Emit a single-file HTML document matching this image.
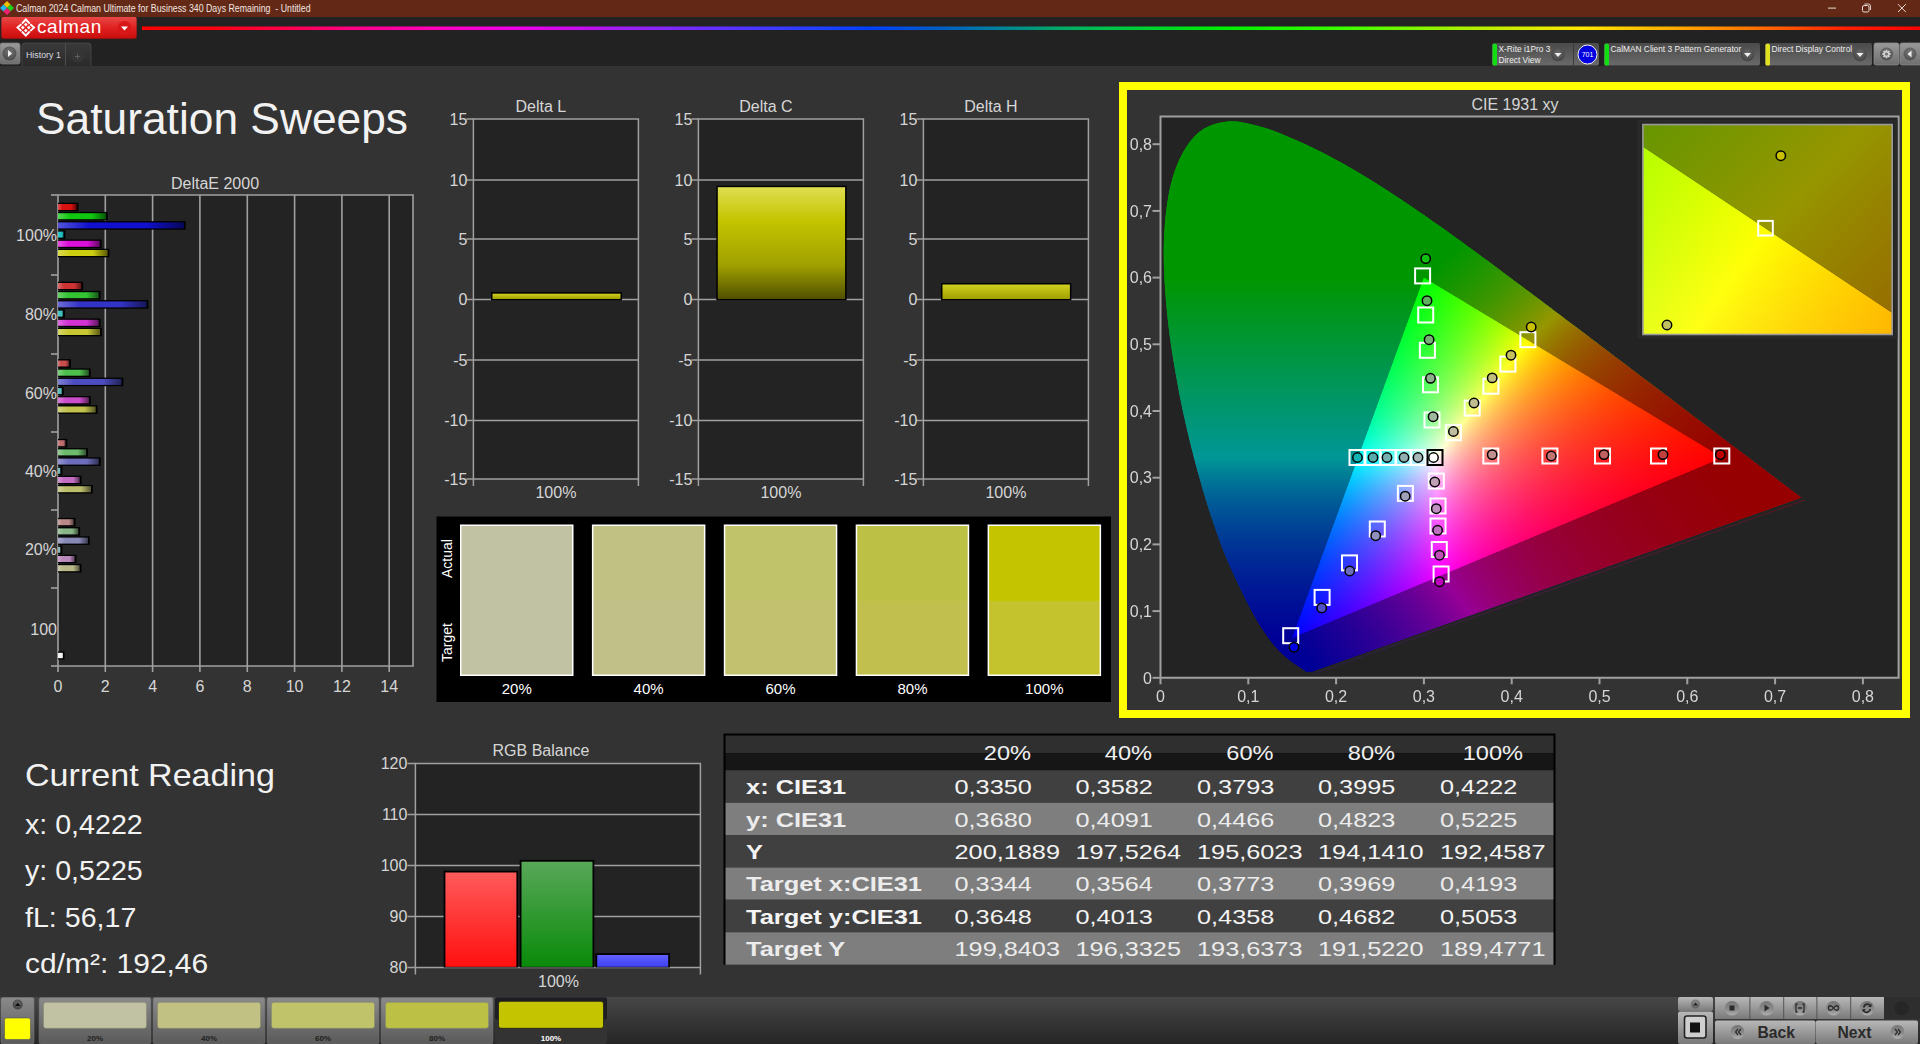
<!DOCTYPE html>
<html><head><meta charset="utf-8"><title>Calman</title>
<style>
html,body{margin:0;padding:0;width:1920px;height:1044px;overflow:hidden;background:#333333;}
body{position:relative;font-family:"Liberation Sans", sans-serif;}
svg text{font-family:"Liberation Sans", sans-serif;}
.abs{position:absolute;left:0;top:0;}
</style></head><body>

<svg class="abs" width="1920" height="1044" viewBox="0 0 1920 1044">
<defs>
<linearGradient id="rainbow" x1="0" x2="1" y1="0" y2="0">
 <stop offset="0" stop-color="#ff0000"/>
 <stop offset="0.041" stop-color="#ff0010"/>
 <stop offset="0.083" stop-color="#ff0050"/>
 <stop offset="0.125" stop-color="#ff0090"/>
 <stop offset="0.168" stop-color="#ff00c0"/>
 <stop offset="0.21" stop-color="#f000e8"/>
 <stop offset="0.252" stop-color="#c010f0"/>
 <stop offset="0.269" stop-color="#a020f0"/>
 <stop offset="0.325" stop-color="#6030ff"/>
 <stop offset="0.381" stop-color="#2040ff"/>
 <stop offset="0.409" stop-color="#0040ff"/>
 <stop offset="0.452" stop-color="#0060c0"/>
 <stop offset="0.48" stop-color="#0080a0"/>
 <stop offset="0.508" stop-color="#00a070"/>
 <stop offset="0.539" stop-color="#00c050"/>
 <stop offset="0.609" stop-color="#00f000"/>
 <stop offset="0.679" stop-color="#40ff00"/>
 <stop offset="0.736" stop-color="#a0f000"/>
 <stop offset="0.809" stop-color="#ffe800"/>
 <stop offset="0.858" stop-color="#ffb000"/>
 <stop offset="0.908" stop-color="#ff7000"/>
 <stop offset="0.958" stop-color="#ff2000"/>
 <stop offset="1" stop-color="#ff0000"/>
</linearGradient>
<linearGradient id="redbtn" x1="0" x2="0" y1="0" y2="1">
 <stop offset="0" stop-color="#e84848"/><stop offset="0.5" stop-color="#e02020"/><stop offset="1" stop-color="#c80c0c"/>
</linearGradient>
<linearGradient id="devbox" x1="0" x2="0" y1="0" y2="1">
 <stop offset="0" stop-color="#4a4a4a"/><stop offset="1" stop-color="#6a6a6a"/>
</linearGradient>
<linearGradient id="tabg" x1="0" x2="0" y1="0" y2="1">
 <stop offset="0" stop-color="#3a3a3a"/><stop offset="1" stop-color="#2a2a2a"/>
</linearGradient>
<linearGradient id="btng" x1="0" x2="0" y1="0" y2="1">
 <stop offset="0" stop-color="#9a9a9a"/><stop offset="1" stop-color="#6e6e6e"/>
</linearGradient>
<radialGradient id="knob" cx="0.5" cy="0.4" r="0.6">
 <stop offset="0" stop-color="#707070"/><stop offset="1" stop-color="#3e3e3e"/>
</radialGradient>
<linearGradient id="knob2" x1="0" x2="0" y1="0" y2="1">
 <stop offset="0" stop-color="#767676"/><stop offset="0.6" stop-color="#8c8c8c"/><stop offset="1" stop-color="#b0b0b0"/>
</linearGradient>
<linearGradient id="botbar" x1="0" x2="0" y1="0" y2="1">
 <stop offset="0" stop-color="#474747"/><stop offset="1" stop-color="#252525"/>
</linearGradient>
<linearGradient id="swbtn" x1="0" x2="0" y1="0" y2="1">
 <stop offset="0" stop-color="#8a8a8a"/><stop offset="1" stop-color="#5a5a5a"/>
</linearGradient>
<linearGradient id="ctrlbtn" x1="0" x2="0" y1="0" y2="1">
 <stop offset="0" stop-color="#b8b8b8"/><stop offset="1" stop-color="#7a7a7a"/>
</linearGradient>
<linearGradient id="dcbar" x1="0" x2="0" y1="0" y2="1">
 <stop offset="0" stop-color="#dede50"/><stop offset="0.3" stop-color="#c4c400"/><stop offset="0.7" stop-color="#a0a000"/><stop offset="1" stop-color="#505000"/>
</linearGradient>
<linearGradient id="dlbar" x1="0" x2="0" y1="0" y2="1">
 <stop offset="0" stop-color="#d0d020"/><stop offset="1" stop-color="#a0a000"/>
</linearGradient>
<linearGradient id="hdr" x1="0" x2="0" y1="0" y2="1">
 <stop offset="0" stop-color="#2c2c2c"/><stop offset="0.45" stop-color="#2a2a2a"/><stop offset="0.5" stop-color="#1a1a1a"/><stop offset="1" stop-color="#161616"/>
</linearGradient>
<linearGradient id="rgbR" x1="0" x2="0" y1="0" y2="1"><stop offset="0" stop-color="#ff5a5a"/><stop offset="1" stop-color="#ff1010"/></linearGradient>
<linearGradient id="rgbG" x1="0" x2="0" y1="0" y2="1"><stop offset="0" stop-color="#58a858"/><stop offset="1" stop-color="#0a8a0a"/></linearGradient>
<linearGradient id="rgbB" x1="0" x2="0" y1="0" y2="1"><stop offset="0" stop-color="#6060ff"/><stop offset="1" stop-color="#4040f0"/></linearGradient>
</defs>
<rect x="0" y="0" width="1920" height="17" fill="#632816"/>
<rect x="0" y="17" width="1920" height="49" fill="#222222"/>
<g transform="translate(7,8)"><rect x="-2.5" y="-6" width="5" height="5" fill="#f0c000" transform="rotate(45 0 -3.5)"/><rect x="-6" y="-2.5" width="5" height="5" fill="#20b8f0" transform="rotate(45 -3.5 0)"/><rect x="1" y="-2.5" width="5" height="5" fill="#20d020" transform="rotate(45 3.5 0)"/><rect x="-2.5" y="1" width="5" height="5" fill="#f02070" transform="rotate(45 0 3.5)"/></g>
<text transform="translate(16,12) scale(0.88,1)" font-size="10" fill="#f0e6e0" text-anchor="start" font-weight="normal" >Calman 2024 Calman Ultimate for Business 340 Days Remaining&#160; - Untitled</text>
<rect x="1828" y="7.6" width="8" height="1" fill="#e8dcd6"/>
<rect x="1862.5" y="5.5" width="6.5" height="6.5" rx="1.5" fill="none" stroke="#e8dcd6" stroke-width="1"/><path d="M1864.5 4 H1868.5 Q1870.5 4 1870.5 6 V10" fill="none" stroke="#e8dcd6" stroke-width="0.9"/>
<path d="M1898 4.2 L1905.8 12 M1905.8 4.2 L1898 12" stroke="#e8dcd6" stroke-width="1"/>
<rect x="1" y="17" width="136" height="22" rx="2" fill="url(#redbtn)"/>
<path d="M1 17 V36 Q1 39 4 39 H134 Q137 39 137 36 V17" fill="none" stroke="#3a2020" stroke-width="0.8"/>
<g transform="translate(25.8,27.6)" fill="none" stroke="#ffffff" stroke-width="1.9" stroke-linejoin="miter"><path d="M-3.9 -3.9 L0 -8.1 L3.9 -3.9"/><path d="M-3.9 3.9 L0 8.1 L3.9 3.9"/><path d="M-4.4 -3.4 L-8.3 0 L-4.4 3.4"/><path d="M4.4 -3.4 L8.3 0 L4.4 3.4"/></g>
<g transform="translate(25.8,27.6)" fill="#ffffff"><path d="M0 -4.9 L1.8 -3 L0 -1.1 L-1.8 -3 Z"/><path d="M0 4.9 L1.8 3 L0 1.1 L-1.8 3 Z"/><path d="M-4.9 0 L-3 1.8 L-1.1 0 L-3 -1.8 Z"/><path d="M4.9 0 L3 1.8 L1.1 0 L3 -1.8 Z"/></g>
<text x="37" y="33" font-size="19" fill="#ffffff" text-anchor="start" font-weight="normal" letter-spacing="0.6">calman</text>
<circle cx="124.5" cy="28" r="7" fill="#d81818"/><path d="M121 26.5 L128 26.5 L124.5 30.5 Z" fill="#ffffff"/>
<rect x="142" y="26.5" width="1778" height="3.5" fill="url(#rainbow)"/>
<rect x="0" y="43" width="20" height="21" rx="2" fill="url(#btng)" stroke="#7a7a7a" stroke-width="0.8"/>
<circle cx="9.5" cy="53.5" r="7" fill="url(#knob)" opacity="0.8"/><path d="M8 50 L12 53.5 L8 57 Z" fill="#f0f0f0"/>
<path d="M22 66 V46 Q22 43 25 43 H88 Q91 43 91 46 V66" fill="url(#tabg)" stroke="#4a4a4a" stroke-width="0.8"/>
<rect x="65" y="43.5" width="1" height="22" fill="#4e4e4e"/>
<text transform="translate(26,58) scale(0.93,1)" font-size="9.5" fill="#d8d8e0" text-anchor="start" font-weight="normal" >History 1</text>
<circle cx="77.5" cy="56" r="6.5" fill="#363636"/><path d="M75 56.5 H80 M77.5 54 V59" stroke="#666" stroke-width="0.8"/>
<rect x="1492" y="43" width="107" height="22.6" rx="2" fill="url(#devbox)"/><rect x="1492.5" y="43.8" width="4.5" height="21.8" rx="1.5" fill="#14dc14"/><text transform="translate(1498.5,51.5) scale(0.97,1)" font-size="8.6" fill="#eeeeee" text-anchor="start" font-weight="normal" >X-Rite i1Pro 3</text><text transform="translate(1498.5,62.5) scale(0.97,1)" font-size="8.6" fill="#eeeeee" text-anchor="start" font-weight="normal" >Direct View</text><circle cx="1558" cy="54.5" r="6.8" fill="url(#knob)" opacity="0.9"/><path d="M1554.5 53 L1561.5 53 L1558 57 Z" fill="#f0f0f0"/>
<rect x="1573" y="44" width="1" height="21" fill="#3a3a3a"/>
<circle cx="1587.5" cy="54.5" r="9.5" fill="#0000e0" stroke="#f0f0f0" stroke-width="1"/>
<text x="1587.5" y="57" font-size="7" fill="#ffffff" text-anchor="middle" font-weight="normal" >701</text>
<rect x="1604" y="43" width="156" height="22.6" rx="2" fill="url(#devbox)"/><rect x="1604.5" y="43.8" width="4.5" height="21.8" rx="1.5" fill="#14dc14"/><text transform="translate(1610.5,51.5) scale(0.97,1)" font-size="8.6" fill="#eeeeee" text-anchor="start" font-weight="normal" >CalMAN Client 3 Pattern Generator</text><circle cx="1747.5" cy="54.5" r="6.8" fill="url(#knob)" opacity="0.9"/><path d="M1744.0 53 L1751.0 53 L1747.5 57 Z" fill="#f0f0f0"/>
<rect x="1765" y="43" width="107" height="22.6" rx="2" fill="url(#devbox)"/><rect x="1765.5" y="43.8" width="4.5" height="21.8" rx="1.5" fill="#e0e020"/><text transform="translate(1771.5,51.5) scale(0.97,1)" font-size="8.6" fill="#eeeeee" text-anchor="start" font-weight="normal" >Direct Display Control</text><circle cx="1860" cy="54.5" r="6.8" fill="url(#knob)" opacity="0.9"/><path d="M1856.5 53 L1863.5 53 L1860 57 Z" fill="#f0f0f0"/>
<rect x="1874" y="43" width="25" height="22" rx="2" fill="url(#btng)" stroke="#888" stroke-width="0.8"/>
<circle cx="1886.5" cy="54" r="6.5" fill="url(#knob)" opacity="0.7"/><path d="M1889.34 53.03 L1890.74 53.26 L1890.74 54.74 L1889.34 54.97 L1889.19 55.32 L1890.02 56.47 L1888.97 57.52 L1887.82 56.69 L1887.47 56.84 L1887.24 58.24 L1885.76 58.24 L1885.53 56.84 L1885.18 56.69 L1884.03 57.52 L1882.98 56.47 L1883.81 55.32 L1883.66 54.97 L1882.26 54.74 L1882.26 53.26 L1883.66 53.03 L1883.81 52.68 L1882.98 51.53 L1884.03 50.48 L1885.18 51.31 L1885.53 51.16 L1885.76 49.76 L1887.24 49.76 L1887.47 51.16 L1887.82 51.31 L1888.97 50.48 L1890.02 51.53 L1889.19 52.68 Z M1888.0 54 A1.5 1.5 0 1 0 1885.0 54 A1.5 1.5 0 1 0 1888.0 54 Z" fill="#d0d0d0" fill-rule="evenodd"/>
<rect x="1900" y="43" width="22" height="22" rx="2" fill="url(#btng)" stroke="#888" stroke-width="0.8"/>
<circle cx="1910" cy="54" r="6.5" fill="url(#knob)" opacity="0.7"/><path d="M1911.5 50.5 L1907.5 54 L1911.5 57.5 Z" fill="#f0f0f0"/>
<text transform="translate(36,133.5) scale(0.985,1)" font-size="45" fill="#f2f2f2" text-anchor="start" font-weight="normal" >Saturation Sweeps</text>
<rect x="58" y="195" width="355" height="471" fill="#232323"/>
<rect x="104.5" y="195" width="1.6" height="471" fill="#a0a0a0"/>
<rect x="151.8" y="195" width="1.6" height="471" fill="#a0a0a0"/>
<rect x="199.1" y="195" width="1.6" height="471" fill="#a0a0a0"/>
<rect x="246.5" y="195" width="1.6" height="471" fill="#a0a0a0"/>
<rect x="293.8" y="195" width="1.6" height="471" fill="#a0a0a0"/>
<rect x="341.1" y="195" width="1.6" height="471" fill="#a0a0a0"/>
<rect x="388.4" y="195" width="1.6" height="471" fill="#a0a0a0"/>
<path d="M58 666 V195 H413 V666 H58" fill="none" stroke="#a0a0a0" stroke-width="1.6"/>
<rect x="51" y="194.2" width="7" height="1.6" fill="#a0a0a0"/>
<rect x="51" y="274.2" width="7" height="1.6" fill="#a0a0a0"/>
<rect x="51" y="353.2" width="7" height="1.6" fill="#a0a0a0"/>
<rect x="51" y="431.2" width="7" height="1.6" fill="#a0a0a0"/>
<rect x="51" y="509.2" width="7" height="1.6" fill="#a0a0a0"/>
<rect x="51" y="587.2" width="7" height="1.6" fill="#a0a0a0"/>
<rect x="51" y="665.2" width="7" height="1.6" fill="#a0a0a0"/>
<rect x="57.2" y="666" width="1.6" height="6" fill="#a0a0a0"/>
<text x="58.0" y="692" font-size="16" fill="#d6d6d6" text-anchor="middle" font-weight="normal" >0</text>
<rect x="104.5" y="666" width="1.6" height="6" fill="#a0a0a0"/>
<text x="105.3" y="692" font-size="16" fill="#d6d6d6" text-anchor="middle" font-weight="normal" >2</text>
<rect x="151.8" y="666" width="1.6" height="6" fill="#a0a0a0"/>
<text x="152.6" y="692" font-size="16" fill="#d6d6d6" text-anchor="middle" font-weight="normal" >4</text>
<rect x="199.1" y="666" width="1.6" height="6" fill="#a0a0a0"/>
<text x="199.9" y="692" font-size="16" fill="#d6d6d6" text-anchor="middle" font-weight="normal" >6</text>
<rect x="246.5" y="666" width="1.6" height="6" fill="#a0a0a0"/>
<text x="247.3" y="692" font-size="16" fill="#d6d6d6" text-anchor="middle" font-weight="normal" >8</text>
<rect x="293.8" y="666" width="1.6" height="6" fill="#a0a0a0"/>
<text x="294.6" y="692" font-size="16" fill="#d6d6d6" text-anchor="middle" font-weight="normal" >10</text>
<rect x="341.1" y="666" width="1.6" height="6" fill="#a0a0a0"/>
<text x="341.9" y="692" font-size="16" fill="#d6d6d6" text-anchor="middle" font-weight="normal" >12</text>
<rect x="388.4" y="666" width="1.6" height="6" fill="#a0a0a0"/>
<text x="389.2" y="692" font-size="16" fill="#d6d6d6" text-anchor="middle" font-weight="normal" >14</text>
<text x="57" y="240.5" font-size="16" fill="#d6d6d6" text-anchor="end" font-weight="normal" >100%</text>
<text x="57" y="320.0" font-size="16" fill="#d6d6d6" text-anchor="end" font-weight="normal" >80%</text>
<text x="57" y="398.5" font-size="16" fill="#d6d6d6" text-anchor="end" font-weight="normal" >60%</text>
<text x="57" y="476.5" font-size="16" fill="#d6d6d6" text-anchor="end" font-weight="normal" >40%</text>
<text x="57" y="554.5" font-size="16" fill="#d6d6d6" text-anchor="end" font-weight="normal" >20%</text>
<text x="57" y="634.5" font-size="16" fill="#d6d6d6" text-anchor="end" font-weight="normal" >100</text>
<text x="215" y="189" font-size="16" fill="#d6d6d6" text-anchor="middle" font-weight="normal" >DeltaE 2000</text>
<linearGradient id="bg1" x1="0" x2="1" y1="0" y2="0"><stop offset="0" stop-color="#e25353"/><stop offset="0.25" stop-color="#d71010"/><stop offset="0.7" stop-color="#d71010"/><stop offset="1" stop-color="#610707"/></linearGradient>
<rect x="58" y="202.7" width="20.4" height="8.6" fill="#000"/>
<rect x="58" y="204.0" width="18.6" height="6.0" fill="url(#bg1)"/>
<linearGradient id="bg2" x1="0" x2="1" y1="0" y2="0"><stop offset="0" stop-color="#53d753"/><stop offset="0.25" stop-color="#10c810"/><stop offset="0.7" stop-color="#10c810"/><stop offset="1" stop-color="#075a07"/></linearGradient>
<rect x="58" y="211.9" width="49.7" height="8.6" fill="#000"/>
<rect x="58" y="213.2" width="47.9" height="6.0" fill="url(#bg2)"/>
<linearGradient id="bg3" x1="0" x2="1" y1="0" y2="0"><stop offset="0" stop-color="#5353db"/><stop offset="0.25" stop-color="#1010cd"/><stop offset="0.7" stop-color="#1010cd"/><stop offset="1" stop-color="#07075c"/></linearGradient>
<rect x="58" y="221.1" width="127.7" height="8.6" fill="#000"/>
<rect x="58" y="222.4" width="125.9" height="6.0" fill="url(#bg3)"/>
<linearGradient id="bg4" x1="0" x2="1" y1="0" y2="0"><stop offset="0" stop-color="#5ed5d5"/><stop offset="0.25" stop-color="#20c4c4"/><stop offset="0.7" stop-color="#20c4c4"/><stop offset="1" stop-color="#0e5858"/></linearGradient>
<rect x="58" y="230.3" width="7.4" height="8.6" fill="#000"/>
<rect x="58" y="231.6" width="5.6" height="6.0" fill="url(#bg4)"/>
<linearGradient id="bg5" x1="0" x2="1" y1="0" y2="0"><stop offset="0" stop-color="#e653e6"/><stop offset="0.25" stop-color="#dc10dc"/><stop offset="0.7" stop-color="#dc10dc"/><stop offset="1" stop-color="#630763"/></linearGradient>
<rect x="58" y="239.5" width="43.6" height="8.6" fill="#000"/>
<rect x="58" y="240.8" width="41.8" height="6.0" fill="url(#bg5)"/>
<linearGradient id="bg6" x1="0" x2="1" y1="0" y2="0"><stop offset="0" stop-color="#dbdb53"/><stop offset="0.25" stop-color="#cdcd10"/><stop offset="0.7" stop-color="#cdcd10"/><stop offset="1" stop-color="#5c5c07"/></linearGradient>
<rect x="58" y="248.7" width="51.4" height="8.6" fill="#000"/>
<rect x="58" y="250.0" width="49.6" height="6.0" fill="url(#bg6)"/>
<linearGradient id="bg7" x1="0" x2="1" y1="0" y2="0"><stop offset="0" stop-color="#dc6c6c"/><stop offset="0.25" stop-color="#ce3333"/><stop offset="0.7" stop-color="#ce3333"/><stop offset="1" stop-color="#5d1717"/></linearGradient>
<rect x="58" y="281.7" width="25.1" height="8.6" fill="#000"/>
<rect x="58" y="283.0" width="23.3" height="6.0" fill="url(#bg7)"/>
<linearGradient id="bg8" x1="0" x2="1" y1="0" y2="0"><stop offset="0" stop-color="#6cd46c"/><stop offset="0.25" stop-color="#33c333"/><stop offset="0.7" stop-color="#33c333"/><stop offset="1" stop-color="#175817"/></linearGradient>
<rect x="58" y="290.9" width="42.5" height="8.6" fill="#000"/>
<rect x="58" y="292.2" width="40.7" height="6.0" fill="url(#bg8)"/>
<linearGradient id="bg9" x1="0" x2="1" y1="0" y2="0"><stop offset="0" stop-color="#6c6cd7"/><stop offset="0.25" stop-color="#3333c7"/><stop offset="0.7" stop-color="#3333c7"/><stop offset="1" stop-color="#17175a"/></linearGradient>
<rect x="58" y="300.1" width="90.3" height="8.6" fill="#000"/>
<rect x="58" y="301.4" width="88.5" height="6.0" fill="url(#bg9)"/>
<linearGradient id="bg10" x1="0" x2="1" y1="0" y2="0"><stop offset="0" stop-color="#75d2d2"/><stop offset="0.25" stop-color="#40c0c0"/><stop offset="0.7" stop-color="#40c0c0"/><stop offset="1" stop-color="#1d5656"/></linearGradient>
<rect x="58" y="309.3" width="6.9" height="8.6" fill="#000"/>
<rect x="58" y="310.6" width="5.1" height="6.0" fill="url(#bg10)"/>
<linearGradient id="bg11" x1="0" x2="1" y1="0" y2="0"><stop offset="0" stop-color="#df6cdf"/><stop offset="0.25" stop-color="#d233d2"/><stop offset="0.7" stop-color="#d233d2"/><stop offset="1" stop-color="#5e175e"/></linearGradient>
<rect x="58" y="318.5" width="42.5" height="8.6" fill="#000"/>
<rect x="58" y="319.8" width="40.7" height="6.0" fill="url(#bg11)"/>
<linearGradient id="bg12" x1="0" x2="1" y1="0" y2="0"><stop offset="0" stop-color="#d7d76c"/><stop offset="0.25" stop-color="#c7c733"/><stop offset="0.7" stop-color="#c7c733"/><stop offset="1" stop-color="#5a5a17"/></linearGradient>
<rect x="58" y="327.7" width="43.9" height="8.6" fill="#000"/>
<rect x="58" y="329.0" width="42.1" height="6.0" fill="url(#bg12)"/>
<linearGradient id="bg13" x1="0" x2="1" y1="0" y2="0"><stop offset="0" stop-color="#d77f7f"/><stop offset="0.25" stop-color="#c84d4d"/><stop offset="0.7" stop-color="#c84d4d"/><stop offset="1" stop-color="#5a2323"/></linearGradient>
<rect x="58" y="359.2" width="12.9" height="8.6" fill="#000"/>
<rect x="58" y="360.5" width="11.1" height="6.0" fill="url(#bg13)"/>
<linearGradient id="bg14" x1="0" x2="1" y1="0" y2="0"><stop offset="0" stop-color="#7fd17f"/><stop offset="0.25" stop-color="#4dbf4d"/><stop offset="0.7" stop-color="#4dbf4d"/><stop offset="1" stop-color="#235623"/></linearGradient>
<rect x="58" y="368.4" width="32.7" height="8.6" fill="#000"/>
<rect x="58" y="369.7" width="30.9" height="6.0" fill="url(#bg14)"/>
<linearGradient id="bg15" x1="0" x2="1" y1="0" y2="0"><stop offset="0" stop-color="#7f7fd3"/><stop offset="0.25" stop-color="#4d4dc2"/><stop offset="0.7" stop-color="#4d4dc2"/><stop offset="1" stop-color="#232357"/></linearGradient>
<rect x="58" y="377.6" width="65.3" height="8.6" fill="#000"/>
<rect x="58" y="378.9" width="63.5" height="6.0" fill="url(#bg15)"/>
<linearGradient id="bg16" x1="0" x2="1" y1="0" y2="0"><stop offset="0" stop-color="#86cfcf"/><stop offset="0.25" stop-color="#57bcbc"/><stop offset="0.7" stop-color="#57bcbc"/><stop offset="1" stop-color="#275555"/></linearGradient>
<rect x="58" y="386.8" width="5.8" height="8.6" fill="#000"/>
<rect x="58" y="388.1" width="4.0" height="6.0" fill="url(#bg16)"/>
<linearGradient id="bg17" x1="0" x2="1" y1="0" y2="0"><stop offset="0" stop-color="#da7fda"/><stop offset="0.25" stop-color="#cb4dcb"/><stop offset="0.7" stop-color="#cb4dcb"/><stop offset="1" stop-color="#5b235b"/></linearGradient>
<rect x="58" y="396.0" width="32.7" height="8.6" fill="#000"/>
<rect x="58" y="397.3" width="30.9" height="6.0" fill="url(#bg17)"/>
<linearGradient id="bg18" x1="0" x2="1" y1="0" y2="0"><stop offset="0" stop-color="#d3d37f"/><stop offset="0.25" stop-color="#c2c24d"/><stop offset="0.7" stop-color="#c2c24d"/><stop offset="1" stop-color="#575723"/></linearGradient>
<rect x="58" y="405.2" width="39.5" height="8.6" fill="#000"/>
<rect x="58" y="406.5" width="37.7" height="6.0" fill="url(#bg18)"/>
<linearGradient id="bg19" x1="0" x2="1" y1="0" y2="0"><stop offset="0" stop-color="#d29696"/><stop offset="0.25" stop-color="#c06d6d"/><stop offset="0.7" stop-color="#c06d6d"/><stop offset="1" stop-color="#563131"/></linearGradient>
<rect x="58" y="438.9" width="9.3" height="8.6" fill="#000"/>
<rect x="58" y="440.2" width="7.5" height="6.0" fill="url(#bg19)"/>
<linearGradient id="bg20" x1="0" x2="1" y1="0" y2="0"><stop offset="0" stop-color="#96cd96"/><stop offset="0.25" stop-color="#6dba6d"/><stop offset="0.7" stop-color="#6dba6d"/><stop offset="1" stop-color="#315431"/></linearGradient>
<rect x="58" y="448.1" width="29.9" height="8.6" fill="#000"/>
<rect x="58" y="449.4" width="28.1" height="6.0" fill="url(#bg20)"/>
<linearGradient id="bg21" x1="0" x2="1" y1="0" y2="0"><stop offset="0" stop-color="#9696cf"/><stop offset="0.25" stop-color="#6d6dbc"/><stop offset="0.7" stop-color="#6d6dbc"/><stop offset="1" stop-color="#313155"/></linearGradient>
<rect x="58" y="457.3" width="42.6" height="8.6" fill="#000"/>
<rect x="58" y="458.6" width="40.8" height="6.0" fill="url(#bg21)"/>
<linearGradient id="bg22" x1="0" x2="1" y1="0" y2="0"><stop offset="0" stop-color="#9bcccc"/><stop offset="0.25" stop-color="#74b8b8"/><stop offset="0.7" stop-color="#74b8b8"/><stop offset="1" stop-color="#345353"/></linearGradient>
<rect x="58" y="466.5" width="4.4" height="8.6" fill="#000"/>
<rect x="58" y="467.8" width="2.6" height="6.0" fill="url(#bg22)"/>
<linearGradient id="bg23" x1="0" x2="1" y1="0" y2="0"><stop offset="0" stop-color="#d396d3"/><stop offset="0.25" stop-color="#c26dc2"/><stop offset="0.7" stop-color="#c26dc2"/><stop offset="1" stop-color="#573157"/></linearGradient>
<rect x="58" y="475.7" width="23.5" height="8.6" fill="#000"/>
<rect x="58" y="477.0" width="21.7" height="6.0" fill="url(#bg23)"/>
<linearGradient id="bg24" x1="0" x2="1" y1="0" y2="0"><stop offset="0" stop-color="#cfcf96"/><stop offset="0.25" stop-color="#bcbc6d"/><stop offset="0.7" stop-color="#bcbc6d"/><stop offset="1" stop-color="#555531"/></linearGradient>
<rect x="58" y="484.9" width="34.8" height="8.6" fill="#000"/>
<rect x="58" y="486.2" width="33.0" height="6.0" fill="url(#bg24)"/>
<linearGradient id="bg25" x1="0" x2="1" y1="0" y2="0"><stop offset="0" stop-color="#cda9a9"/><stop offset="0.25" stop-color="#ba8888"/><stop offset="0.7" stop-color="#ba8888"/><stop offset="1" stop-color="#543d3d"/></linearGradient>
<rect x="58" y="517.9" width="17.5" height="8.6" fill="#000"/>
<rect x="58" y="519.2" width="15.7" height="6.0" fill="url(#bg25)"/>
<linearGradient id="bg26" x1="0" x2="1" y1="0" y2="0"><stop offset="0" stop-color="#a9caa9"/><stop offset="0.25" stop-color="#88b688"/><stop offset="0.7" stop-color="#88b688"/><stop offset="1" stop-color="#3d523d"/></linearGradient>
<rect x="58" y="527.1" width="22.1" height="8.6" fill="#000"/>
<rect x="58" y="528.4" width="20.3" height="6.0" fill="url(#bg26)"/>
<linearGradient id="bg27" x1="0" x2="1" y1="0" y2="0"><stop offset="0" stop-color="#a9a9cb"/><stop offset="0.25" stop-color="#8888b7"/><stop offset="0.7" stop-color="#8888b7"/><stop offset="1" stop-color="#3d3d52"/></linearGradient>
<rect x="58" y="536.3" width="31.7" height="8.6" fill="#000"/>
<rect x="58" y="537.6" width="29.9" height="6.0" fill="url(#bg27)"/>
<linearGradient id="bg28" x1="0" x2="1" y1="0" y2="0"><stop offset="0" stop-color="#accaca"/><stop offset="0.25" stop-color="#8cb5b5"/><stop offset="0.7" stop-color="#8cb5b5"/><stop offset="1" stop-color="#3f5151"/></linearGradient>
<rect x="58" y="545.5" width="4.4" height="8.6" fill="#000"/>
<rect x="58" y="546.8" width="2.6" height="6.0" fill="url(#bg28)"/>
<linearGradient id="bg29" x1="0" x2="1" y1="0" y2="0"><stop offset="0" stop-color="#cea9ce"/><stop offset="0.25" stop-color="#bb88bb"/><stop offset="0.7" stop-color="#bb88bb"/><stop offset="1" stop-color="#543d54"/></linearGradient>
<rect x="58" y="554.7" width="18.5" height="8.6" fill="#000"/>
<rect x="58" y="556.0" width="16.7" height="6.0" fill="url(#bg29)"/>
<linearGradient id="bg30" x1="0" x2="1" y1="0" y2="0"><stop offset="0" stop-color="#cbcba9"/><stop offset="0.25" stop-color="#b7b788"/><stop offset="0.7" stop-color="#b7b788"/><stop offset="1" stop-color="#52523d"/></linearGradient>
<rect x="58" y="563.9" width="23.5" height="8.6" fill="#000"/>
<rect x="58" y="565.2" width="21.7" height="6.0" fill="url(#bg30)"/>
<rect x="58" y="651.5" width="6.5" height="8" fill="#000"/><rect x="58" y="652.8" width="4.8" height="5.4" fill="#f4f4f4"/>
<rect x="473.4" y="119" width="165" height="360" fill="#232323"/>
<rect x="473.4" y="179.25" width="165" height="1.5" fill="#a0a0a0"/>
<rect x="473.4" y="238.25" width="165" height="1.5" fill="#a0a0a0"/>
<rect x="473.4" y="298.75" width="165" height="1.5" fill="#a0a0a0"/>
<rect x="473.4" y="359.25" width="165" height="1.5" fill="#a0a0a0"/>
<rect x="473.4" y="419.75" width="165" height="1.5" fill="#a0a0a0"/>
<path d="M473.4 479 V119 H638.4 V479 H473.4" fill="none" stroke="#a0a0a0" stroke-width="1.5"/>
<rect x="466.4" y="118.25" width="7" height="1.5" fill="#a0a0a0"/>
<text x="467.4" y="124.6" font-size="16" fill="#d6d6d6" text-anchor="end" font-weight="normal" >15</text>
<rect x="466.4" y="179.25" width="7" height="1.5" fill="#a0a0a0"/>
<text x="467.4" y="185.6" font-size="16" fill="#d6d6d6" text-anchor="end" font-weight="normal" >10</text>
<rect x="466.4" y="238.25" width="7" height="1.5" fill="#a0a0a0"/>
<text x="467.4" y="244.6" font-size="16" fill="#d6d6d6" text-anchor="end" font-weight="normal" >5</text>
<rect x="466.4" y="298.75" width="7" height="1.5" fill="#a0a0a0"/>
<text x="467.4" y="305.1" font-size="16" fill="#d6d6d6" text-anchor="end" font-weight="normal" >0</text>
<rect x="466.4" y="359.25" width="7" height="1.5" fill="#a0a0a0"/>
<text x="467.4" y="365.6" font-size="16" fill="#d6d6d6" text-anchor="end" font-weight="normal" >-5</text>
<rect x="466.4" y="419.75" width="7" height="1.5" fill="#a0a0a0"/>
<text x="467.4" y="426.1" font-size="16" fill="#d6d6d6" text-anchor="end" font-weight="normal" >-10</text>
<rect x="466.4" y="478.25" width="7" height="1.5" fill="#a0a0a0"/>
<text x="467.4" y="484.6" font-size="16" fill="#d6d6d6" text-anchor="end" font-weight="normal" >-15</text>
<rect x="472.65" y="479" width="1.5" height="7" fill="#a0a0a0"/><rect x="637.65" y="479" width="1.5" height="7" fill="#a0a0a0"/>
<text x="555.9" y="497.5" font-size="16" fill="#d6d6d6" text-anchor="middle" font-weight="normal" >100%</text>
<text x="540.9" y="112" font-size="16" fill="#d6d6d6" text-anchor="middle" font-weight="normal" >Delta L</text>
<rect x="491" y="292.2" width="131" height="8.300000000000011" fill="#000"/>
<rect x="492.5" y="293.7" width="128" height="5.300000000000011" fill="url(#dlbar)"/>
<rect x="698.4" y="119" width="165" height="360" fill="#232323"/>
<rect x="698.4" y="179.25" width="165" height="1.5" fill="#a0a0a0"/>
<rect x="698.4" y="238.25" width="165" height="1.5" fill="#a0a0a0"/>
<rect x="698.4" y="298.75" width="165" height="1.5" fill="#a0a0a0"/>
<rect x="698.4" y="359.25" width="165" height="1.5" fill="#a0a0a0"/>
<rect x="698.4" y="419.75" width="165" height="1.5" fill="#a0a0a0"/>
<path d="M698.4 479 V119 H863.4 V479 H698.4" fill="none" stroke="#a0a0a0" stroke-width="1.5"/>
<rect x="691.4" y="118.25" width="7" height="1.5" fill="#a0a0a0"/>
<text x="692.4" y="124.6" font-size="16" fill="#d6d6d6" text-anchor="end" font-weight="normal" >15</text>
<rect x="691.4" y="179.25" width="7" height="1.5" fill="#a0a0a0"/>
<text x="692.4" y="185.6" font-size="16" fill="#d6d6d6" text-anchor="end" font-weight="normal" >10</text>
<rect x="691.4" y="238.25" width="7" height="1.5" fill="#a0a0a0"/>
<text x="692.4" y="244.6" font-size="16" fill="#d6d6d6" text-anchor="end" font-weight="normal" >5</text>
<rect x="691.4" y="298.75" width="7" height="1.5" fill="#a0a0a0"/>
<text x="692.4" y="305.1" font-size="16" fill="#d6d6d6" text-anchor="end" font-weight="normal" >0</text>
<rect x="691.4" y="359.25" width="7" height="1.5" fill="#a0a0a0"/>
<text x="692.4" y="365.6" font-size="16" fill="#d6d6d6" text-anchor="end" font-weight="normal" >-5</text>
<rect x="691.4" y="419.75" width="7" height="1.5" fill="#a0a0a0"/>
<text x="692.4" y="426.1" font-size="16" fill="#d6d6d6" text-anchor="end" font-weight="normal" >-10</text>
<rect x="691.4" y="478.25" width="7" height="1.5" fill="#a0a0a0"/>
<text x="692.4" y="484.6" font-size="16" fill="#d6d6d6" text-anchor="end" font-weight="normal" >-15</text>
<rect x="697.65" y="479" width="1.5" height="7" fill="#a0a0a0"/><rect x="862.65" y="479" width="1.5" height="7" fill="#a0a0a0"/>
<text x="780.9" y="497.5" font-size="16" fill="#d6d6d6" text-anchor="middle" font-weight="normal" >100%</text>
<text x="765.9" y="112" font-size="16" fill="#d6d6d6" text-anchor="middle" font-weight="normal" >Delta C</text>
<rect x="716.3" y="185.7" width="130.30000000000007" height="114.80000000000001" fill="#000"/>
<rect x="717.8" y="187.2" width="127.30000000000007" height="111.80000000000001" fill="url(#dcbar)"/>
<rect x="923.4" y="119" width="165" height="360" fill="#232323"/>
<rect x="923.4" y="179.25" width="165" height="1.5" fill="#a0a0a0"/>
<rect x="923.4" y="238.25" width="165" height="1.5" fill="#a0a0a0"/>
<rect x="923.4" y="298.75" width="165" height="1.5" fill="#a0a0a0"/>
<rect x="923.4" y="359.25" width="165" height="1.5" fill="#a0a0a0"/>
<rect x="923.4" y="419.75" width="165" height="1.5" fill="#a0a0a0"/>
<path d="M923.4 479 V119 H1088.4 V479 H923.4" fill="none" stroke="#a0a0a0" stroke-width="1.5"/>
<rect x="916.4" y="118.25" width="7" height="1.5" fill="#a0a0a0"/>
<text x="917.4" y="124.6" font-size="16" fill="#d6d6d6" text-anchor="end" font-weight="normal" >15</text>
<rect x="916.4" y="179.25" width="7" height="1.5" fill="#a0a0a0"/>
<text x="917.4" y="185.6" font-size="16" fill="#d6d6d6" text-anchor="end" font-weight="normal" >10</text>
<rect x="916.4" y="238.25" width="7" height="1.5" fill="#a0a0a0"/>
<text x="917.4" y="244.6" font-size="16" fill="#d6d6d6" text-anchor="end" font-weight="normal" >5</text>
<rect x="916.4" y="298.75" width="7" height="1.5" fill="#a0a0a0"/>
<text x="917.4" y="305.1" font-size="16" fill="#d6d6d6" text-anchor="end" font-weight="normal" >0</text>
<rect x="916.4" y="359.25" width="7" height="1.5" fill="#a0a0a0"/>
<text x="917.4" y="365.6" font-size="16" fill="#d6d6d6" text-anchor="end" font-weight="normal" >-5</text>
<rect x="916.4" y="419.75" width="7" height="1.5" fill="#a0a0a0"/>
<text x="917.4" y="426.1" font-size="16" fill="#d6d6d6" text-anchor="end" font-weight="normal" >-10</text>
<rect x="916.4" y="478.25" width="7" height="1.5" fill="#a0a0a0"/>
<text x="917.4" y="484.6" font-size="16" fill="#d6d6d6" text-anchor="end" font-weight="normal" >-15</text>
<rect x="922.65" y="479" width="1.5" height="7" fill="#a0a0a0"/><rect x="1087.65" y="479" width="1.5" height="7" fill="#a0a0a0"/>
<text x="1005.9" y="497.5" font-size="16" fill="#d6d6d6" text-anchor="middle" font-weight="normal" >100%</text>
<text x="990.9" y="112" font-size="16" fill="#d6d6d6" text-anchor="middle" font-weight="normal" >Delta H</text>
<rect x="941" y="283" width="130.4000000000001" height="17.5" fill="#000"/>
<rect x="942.5" y="284.5" width="127.40000000000009" height="14.5" fill="url(#dlbar)"/>
<rect x="436.5" y="516.5" width="674.5" height="185.5" fill="#000000"/>
<rect x="460.0" y="524.5" width="113.5" height="151.5" fill="#ffffff"/>
<rect x="461.5" y="526" width="110.5" height="75" fill="#c1c2a3"/>
<rect x="461.5" y="601" width="110.5" height="73.5" fill="#c1c2a3"/>
<text x="516.8" y="694" font-size="15" fill="#ffffff" text-anchor="middle" font-weight="normal" >20%</text>
<rect x="591.9" y="524.5" width="113.5" height="151.5" fill="#ffffff"/>
<rect x="593.4" y="526" width="110.5" height="75" fill="#c1c184"/>
<rect x="593.4" y="601" width="110.5" height="73.5" fill="#c1c088"/>
<text x="648.6" y="694" font-size="15" fill="#ffffff" text-anchor="middle" font-weight="normal" >40%</text>
<rect x="723.8" y="524.5" width="113.5" height="151.5" fill="#ffffff"/>
<rect x="725.3" y="526" width="110.5" height="75" fill="#c0c36a"/>
<rect x="725.3" y="601" width="110.5" height="73.5" fill="#c2c16f"/>
<text x="780.5" y="694" font-size="15" fill="#ffffff" text-anchor="middle" font-weight="normal" >60%</text>
<rect x="855.7" y="524.5" width="113.5" height="151.5" fill="#ffffff"/>
<rect x="857.2" y="526" width="110.5" height="75" fill="#bcc044"/>
<rect x="857.2" y="601" width="110.5" height="73.5" fill="#c1bf4e"/>
<text x="912.5" y="694" font-size="15" fill="#ffffff" text-anchor="middle" font-weight="normal" >80%</text>
<rect x="987.6" y="524.5" width="113.5" height="151.5" fill="#ffffff"/>
<rect x="989.1" y="526" width="110.5" height="75" fill="#c4c400"/>
<rect x="989.1" y="601" width="110.5" height="73.5" fill="#c4c22d"/>
<text x="1044.3" y="694" font-size="15" fill="#ffffff" text-anchor="middle" font-weight="normal" >100%</text>
<text transform="translate(452,578) rotate(-90)" font-size="14" fill="#ffffff">Actual</text>
<text transform="translate(452,662) rotate(-90)" font-size="14" fill="#ffffff">Target</text>
<rect x="1123" y="86" width="783" height="628" fill="#333333" stroke="#ffff00" stroke-width="8"/>
<rect x="1160.5" y="116.5" width="738" height="561.3" fill="#232323"/>
<text x="1515" y="110" font-size="16" fill="#d6d6d6" text-anchor="middle" font-weight="normal" >CIE 1931 xy</text>
<text transform="translate(25,786) scale(1.065,1)" font-size="32" fill="#f2f2f2" text-anchor="start" font-weight="normal" >Current Reading</text>
<text transform="translate(25,833.5) scale(1.06,1)" font-size="27" fill="#f2f2f2" text-anchor="start" font-weight="normal" >x: 0,4222</text>
<text transform="translate(25,880.1) scale(1.06,1)" font-size="27" fill="#f2f2f2" text-anchor="start" font-weight="normal" >y: 0,5225</text>
<text transform="translate(25,926.7) scale(1.06,1)" font-size="27" fill="#f2f2f2" text-anchor="start" font-weight="normal" >fL: 56,17</text>
<text transform="translate(25,973.3) scale(1.11,1)" font-size="27" fill="#f2f2f2" text-anchor="start" font-weight="normal" >cd/m&#178;: 192,46</text>
<rect x="415.4" y="763.5" width="285.0" height="204.0" fill="#232323"/>
<rect x="415.4" y="813.75" width="285.0" height="1.5" fill="#a0a0a0"/>
<rect x="415.4" y="864.75" width="285.0" height="1.5" fill="#a0a0a0"/>
<rect x="415.4" y="915.75" width="285.0" height="1.5" fill="#a0a0a0"/>
<path d="M415.4 967.5 V763.5 H700.4 V967.5 H415.4" fill="none" stroke="#a0a0a0" stroke-width="1.5"/>
<rect x="407.4" y="762.75" width="8" height="1.5" fill="#a0a0a0"/>
<text x="407.4" y="769.1" font-size="16" fill="#d6d6d6" text-anchor="end" font-weight="normal" >120</text>
<rect x="407.4" y="813.75" width="8" height="1.5" fill="#a0a0a0"/>
<text x="407.4" y="820.1" font-size="16" fill="#d6d6d6" text-anchor="end" font-weight="normal" >110</text>
<rect x="407.4" y="864.75" width="8" height="1.5" fill="#a0a0a0"/>
<text x="407.4" y="871.1" font-size="16" fill="#d6d6d6" text-anchor="end" font-weight="normal" >100</text>
<rect x="407.4" y="915.75" width="8" height="1.5" fill="#a0a0a0"/>
<text x="407.4" y="922.1" font-size="16" fill="#d6d6d6" text-anchor="end" font-weight="normal" >90</text>
<rect x="407.4" y="966.75" width="8" height="1.5" fill="#a0a0a0"/>
<text x="407.4" y="973.1" font-size="16" fill="#d6d6d6" text-anchor="end" font-weight="normal" >80</text>
<rect x="414.65" y="967.5" width="1.5" height="7" fill="#a0a0a0"/><rect x="699.65" y="967.5" width="1.5" height="7" fill="#a0a0a0"/>
<text x="558.5" y="987" font-size="16" fill="#d6d6d6" text-anchor="middle" font-weight="normal" >100%</text>
<text x="541" y="756" font-size="16" fill="#d6d6d6" text-anchor="middle" font-weight="normal" >RGB Balance</text>
<rect x="443.6" y="870.7" width="74.60000000000002" height="96.79999999999995" fill="#000"/>
<rect x="445.40000000000003" y="872.5" width="71.00000000000003" height="94.29999999999995" fill="url(#rgbR)"/>
<rect x="519.7" y="859.9" width="74.59999999999991" height="107.60000000000002" fill="#000"/>
<rect x="521.5" y="861.6999999999999" width="70.99999999999991" height="105.10000000000002" fill="url(#rgbG)"/>
<rect x="595.4" y="953.2" width="74.60000000000002" height="14.299999999999955" fill="#000"/>
<rect x="597.1999999999999" y="955.0" width="71.00000000000003" height="11.799999999999955" fill="url(#rgbB)"/>
<rect x="723.5" y="733.5" width="832" height="231.25" fill="#000000"/>
<rect x="725.5" y="735.5" width="828.0" height="17.7" fill="#2f2f2f"/>
<rect x="725.5" y="753.2" width="828.0" height="17.0" fill="#161616"/>
<text transform="translate(1031,760) scale(1.18,1)" font-size="20" fill="#f0f0f0" text-anchor="end" font-weight="normal" >20%</text>
<text transform="translate(1152,760) scale(1.18,1)" font-size="20" fill="#f0f0f0" text-anchor="end" font-weight="normal" >40%</text>
<text transform="translate(1273.5,760) scale(1.18,1)" font-size="20" fill="#f0f0f0" text-anchor="end" font-weight="normal" >60%</text>
<text transform="translate(1395,760) scale(1.18,1)" font-size="20" fill="#f0f0f0" text-anchor="end" font-weight="normal" >80%</text>
<text transform="translate(1523,760) scale(1.18,1)" font-size="20" fill="#f0f0f0" text-anchor="end" font-weight="normal" >100%</text>
<rect x="725.5" y="770.2" width="828.0" height="32.39999999999998" fill="#404040"/>
<text transform="translate(746,794.2) scale(1.27,1)" font-size="20" fill="#f4f4f4" text-anchor="start" font-weight="bold" >x: CIE31</text>
<text transform="translate(954.5,794.2) scale(1.265,1)" font-size="20" fill="#f4f4f4" text-anchor="start" font-weight="normal" >0,3350</text>
<text transform="translate(1075.5,794.2) scale(1.265,1)" font-size="20" fill="#f4f4f4" text-anchor="start" font-weight="normal" >0,3582</text>
<text transform="translate(1197,794.2) scale(1.265,1)" font-size="20" fill="#f4f4f4" text-anchor="start" font-weight="normal" >0,3793</text>
<text transform="translate(1318,794.2) scale(1.265,1)" font-size="20" fill="#f4f4f4" text-anchor="start" font-weight="normal" >0,3995</text>
<text transform="translate(1440,794.2) scale(1.265,1)" font-size="20" fill="#f4f4f4" text-anchor="start" font-weight="normal" >0,4222</text>
<rect x="725.5" y="802.6" width="828.0" height="32.39999999999998" fill="#7e7e7e"/>
<text transform="translate(746,826.6) scale(1.27,1)" font-size="20" fill="#ececec" text-anchor="start" font-weight="bold" >y: CIE31</text>
<text transform="translate(954.5,826.6) scale(1.265,1)" font-size="20" fill="#ececec" text-anchor="start" font-weight="normal" >0,3680</text>
<text transform="translate(1075.5,826.6) scale(1.265,1)" font-size="20" fill="#ececec" text-anchor="start" font-weight="normal" >0,4091</text>
<text transform="translate(1197,826.6) scale(1.265,1)" font-size="20" fill="#ececec" text-anchor="start" font-weight="normal" >0,4466</text>
<text transform="translate(1318,826.6) scale(1.265,1)" font-size="20" fill="#ececec" text-anchor="start" font-weight="normal" >0,4823</text>
<text transform="translate(1440,826.6) scale(1.265,1)" font-size="20" fill="#ececec" text-anchor="start" font-weight="normal" >0,5225</text>
<rect x="725.5" y="835.0" width="828.0" height="32.39999999999998" fill="#404040"/>
<text transform="translate(746,859.0) scale(1.27,1)" font-size="20" fill="#f4f4f4" text-anchor="start" font-weight="bold" >Y</text>
<text transform="translate(954.5,859.0) scale(1.265,1)" font-size="20" fill="#f4f4f4" text-anchor="start" font-weight="normal" >200,1889</text>
<text transform="translate(1075.5,859.0) scale(1.265,1)" font-size="20" fill="#f4f4f4" text-anchor="start" font-weight="normal" >197,5264</text>
<text transform="translate(1197,859.0) scale(1.265,1)" font-size="20" fill="#f4f4f4" text-anchor="start" font-weight="normal" >195,6023</text>
<text transform="translate(1318,859.0) scale(1.265,1)" font-size="20" fill="#f4f4f4" text-anchor="start" font-weight="normal" >194,1410</text>
<text transform="translate(1440,859.0) scale(1.265,1)" font-size="20" fill="#f4f4f4" text-anchor="start" font-weight="normal" >192,4587</text>
<rect x="725.5" y="867.4" width="828.0" height="32.39999999999998" fill="#7e7e7e"/>
<text transform="translate(746,891.4) scale(1.27,1)" font-size="20" fill="#ececec" text-anchor="start" font-weight="bold" >Target x:CIE31</text>
<text transform="translate(954.5,891.4) scale(1.265,1)" font-size="20" fill="#ececec" text-anchor="start" font-weight="normal" >0,3344</text>
<text transform="translate(1075.5,891.4) scale(1.265,1)" font-size="20" fill="#ececec" text-anchor="start" font-weight="normal" >0,3564</text>
<text transform="translate(1197,891.4) scale(1.265,1)" font-size="20" fill="#ececec" text-anchor="start" font-weight="normal" >0,3773</text>
<text transform="translate(1318,891.4) scale(1.265,1)" font-size="20" fill="#ececec" text-anchor="start" font-weight="normal" >0,3969</text>
<text transform="translate(1440,891.4) scale(1.265,1)" font-size="20" fill="#ececec" text-anchor="start" font-weight="normal" >0,4193</text>
<rect x="725.5" y="899.8" width="828.0" height="32.40000000000009" fill="#404040"/>
<text transform="translate(746,923.8) scale(1.27,1)" font-size="20" fill="#f4f4f4" text-anchor="start" font-weight="bold" >Target y:CIE31</text>
<text transform="translate(954.5,923.8) scale(1.265,1)" font-size="20" fill="#f4f4f4" text-anchor="start" font-weight="normal" >0,3648</text>
<text transform="translate(1075.5,923.8) scale(1.265,1)" font-size="20" fill="#f4f4f4" text-anchor="start" font-weight="normal" >0,4013</text>
<text transform="translate(1197,923.8) scale(1.265,1)" font-size="20" fill="#f4f4f4" text-anchor="start" font-weight="normal" >0,4358</text>
<text transform="translate(1318,923.8) scale(1.265,1)" font-size="20" fill="#f4f4f4" text-anchor="start" font-weight="normal" >0,4682</text>
<text transform="translate(1440,923.8) scale(1.265,1)" font-size="20" fill="#f4f4f4" text-anchor="start" font-weight="normal" >0,5053</text>
<rect x="725.5" y="932.2" width="828.0" height="32.549999999999955" fill="#7e7e7e"/>
<text transform="translate(746,956.2) scale(1.27,1)" font-size="20" fill="#ececec" text-anchor="start" font-weight="bold" >Target Y</text>
<text transform="translate(954.5,956.2) scale(1.265,1)" font-size="20" fill="#ececec" text-anchor="start" font-weight="normal" >199,8403</text>
<text transform="translate(1075.5,956.2) scale(1.265,1)" font-size="20" fill="#ececec" text-anchor="start" font-weight="normal" >196,3325</text>
<text transform="translate(1197,956.2) scale(1.265,1)" font-size="20" fill="#ececec" text-anchor="start" font-weight="normal" >193,6373</text>
<text transform="translate(1318,956.2) scale(1.265,1)" font-size="20" fill="#ececec" text-anchor="start" font-weight="normal" >191,5220</text>
<text transform="translate(1440,956.2) scale(1.265,1)" font-size="20" fill="#ececec" text-anchor="start" font-weight="normal" >189,4771</text>
<rect x="0" y="997" width="1920" height="47" fill="url(#botbar)"/>
<rect x="1" y="997.5" width="33" height="46.5" rx="2" fill="url(#swbtn)" stroke="#777" stroke-width="0.6"/>
<circle cx="17.7" cy="1004.5" r="5" fill="url(#knob)"/><path d="M15 1006 L20.5 1006 L17.7 1002.5 Z" fill="#111"/>
<rect x="4.5" y="1018" width="26" height="21.5" rx="2" fill="#ffff00" stroke="#555" stroke-width="0.6"/>
<rect x="39" y="997.5" width="112" height="46.5" rx="2" fill="url(#swbtn)" stroke="#6a6a6a" stroke-width="0.6"/>
<rect x="43.5" y="1002.3" width="103" height="26" rx="2.5" fill="#c1c2a3" stroke="#8a8a70" stroke-width="0.6"/>
<text x="95" y="1040.5" font-size="8" fill="#1e1e1e" text-anchor="middle" font-weight="bold" >20%</text>
<rect x="153" y="997.5" width="112" height="46.5" rx="2" fill="url(#swbtn)" stroke="#6a6a6a" stroke-width="0.6"/>
<rect x="157.5" y="1002.3" width="103" height="26" rx="2.5" fill="#c1c184" stroke="#8a8a70" stroke-width="0.6"/>
<text x="209" y="1040.5" font-size="8" fill="#1e1e1e" text-anchor="middle" font-weight="bold" >40%</text>
<rect x="267" y="997.5" width="112" height="46.5" rx="2" fill="url(#swbtn)" stroke="#6a6a6a" stroke-width="0.6"/>
<rect x="271.5" y="1002.3" width="103" height="26" rx="2.5" fill="#c0c36a" stroke="#8a8a70" stroke-width="0.6"/>
<text x="323" y="1040.5" font-size="8" fill="#1e1e1e" text-anchor="middle" font-weight="bold" >60%</text>
<rect x="381" y="997.5" width="112" height="46.5" rx="2" fill="url(#swbtn)" stroke="#6a6a6a" stroke-width="0.6"/>
<rect x="385.5" y="1002.3" width="103" height="26" rx="2.5" fill="#bcc044" stroke="#8a8a70" stroke-width="0.6"/>
<text x="437" y="1040.5" font-size="8" fill="#1e1e1e" text-anchor="middle" font-weight="bold" >80%</text>
<rect x="495" y="997.5" width="112" height="46.5" rx="2" fill="#333333"/>
<rect x="495" y="997.5" width="112" height="22" rx="2" fill="#1e1e22"/>
<rect x="498.5" y="1001.3" width="105" height="27" rx="2.5" fill="#c4c400" stroke="#20201a" stroke-width="0.8"/>
<text x="551" y="1040.5" font-size="8" fill="#ffffff" text-anchor="middle" font-weight="bold" >100%</text>
<rect x="1678" y="997" width="35" height="14" rx="2" fill="url(#ctrlbtn)"/>
<circle cx="1695.5" cy="1004" r="4.5" fill="url(#knob)" opacity="0.5"/><path d="M1693 1005.5 L1698 1005.5 L1695.5 1002.5 Z" fill="#222"/>
<rect x="1678" y="1011.5" width="35" height="32.5" rx="2" fill="url(#ctrlbtn)"/>
<rect x="1684.5" y="1016" width="21.5" height="22" rx="2.5" fill="#cfcfcf" stroke="#222" stroke-width="1.6"/>
<rect x="1690" y="1022.5" width="10" height="10" fill="#111"/>
<rect x="1715" y="997" width="169" height="22" fill="url(#ctrlbtn)"/>
<rect x="1749.4" y="997" width="1" height="22" fill="#555"/>
<rect x="1783.2" y="997" width="1" height="22" fill="#555"/>
<rect x="1816.4" y="997" width="1" height="22" fill="#555"/>
<rect x="1850.2" y="997" width="1" height="22" fill="#555"/>
<circle cx="1732" cy="1008.3" r="7.3" fill="url(#knob2)"/>
<circle cx="1766.5" cy="1008.3" r="7.3" fill="url(#knob2)"/>
<circle cx="1800" cy="1008.3" r="7.3" fill="url(#knob2)"/>
<circle cx="1833.5" cy="1008.3" r="7.3" fill="url(#knob2)"/>
<circle cx="1867" cy="1008.3" r="7.3" fill="url(#knob2)"/>
<rect x="1729.5" y="1005.5" width="5" height="5" fill="#2a2a2a"/>
<path d="M1764.5 1004.5 L1769.5 1008 L1764.5 1011.5 Z" fill="#2a2a2a"/>
<path d="M1797.5 1004 h-1.5 v8 h1.5 M1802.5 1004 h1.5 v8 h-1.5 M1798 1008 h4" fill="none" stroke="#2a2a2a" stroke-width="1.3"/>
<path d="M1833.5 1008 c-2 -3 -5 -3 -5 0 c0 3 3 3 5 0 c2 -3 5 -3 5 0 c0 3 -3 3 -5 0" fill="none" stroke="#2a2a2a" stroke-width="1.3"/>
<path d="M1863.8 1007.5 a3.6 3.6 0 0 1 6.4 -2 M1870.2 1009 a3.6 3.6 0 0 1 -6.4 2" fill="none" stroke="#2a2a2a" stroke-width="1.7"/><path d="M1871.5 1003.5 v3.5 h-3.5 Z M1862.5 1012.5 v-3.5 h3.5 Z" fill="#2a2a2a"/>
<rect x="1884" y="997" width="36" height="22" fill="#2e2e2e"/><circle cx="1901.7" cy="1008.3" r="7" fill="#262626"/>
<rect x="1715" y="1020.5" width="100.5" height="23.5" rx="2" fill="url(#ctrlbtn)"/>
<rect x="1815.8" y="1020.5" width="102.2" height="23.5" rx="2" fill="url(#ctrlbtn)"/>
<circle cx="1737.5" cy="1032" r="7" fill="url(#knob2)"/><circle cx="1897.5" cy="1032" r="7" fill="url(#knob2)"/>
<path d="M1738 1029 l-2.5 3 l2.5 3 M1741 1029 l-2.5 3 l2.5 3" fill="none" stroke="#2a2a2a" stroke-width="1.2"/>
<path d="M1895 1029 l2.5 3 l-2.5 3 M1898 1029 l2.5 3 l-2.5 3" fill="none" stroke="#2a2a2a" stroke-width="1.2"/>
<text transform="translate(1757.5,1038) scale(0.98,1)" font-size="16" fill="#2a2a2a" text-anchor="start" font-weight="bold" >Back</text>
<text transform="translate(1837.5,1038) scale(0.98,1)" font-size="16" fill="#2a2a2a" text-anchor="start" font-weight="bold" >Next</text>
</svg>
<svg class="abs" width="1920" height="1044" viewBox="0 0 1920 1044">
<defs>
<linearGradient id="fbL" gradientUnits="userSpaceOnUse" x1="0" y1="277.6" x2="0" y2="637.8"><stop offset="0" stop-color="#009900"/><stop offset="0.5" stop-color="#009890"/><stop offset="1" stop-color="#0000a0"/></linearGradient>
<linearGradient id="fbRG" gradientUnits="userSpaceOnUse" x1="1423.9" y1="277.6" x2="1722.4" y2="457.7"><stop offset="0" stop-color="#00ff00"/><stop offset="0.45" stop-color="#ffff00"/><stop offset="1" stop-color="#ff0000"/></linearGradient>
<linearGradient id="fbGB" gradientUnits="userSpaceOnUse" x1="1423.9" y1="277.6" x2="1292.2" y2="637.8"><stop offset="0" stop-color="#00ff00"/><stop offset="0.5" stop-color="#00ffff"/><stop offset="1" stop-color="#0000ff"/></linearGradient>
<linearGradient id="fbBR" gradientUnits="userSpaceOnUse" x1="1292.2" y1="637.8" x2="1722.4" y2="457.7"><stop offset="0" stop-color="#0000ff"/><stop offset="0.35" stop-color="#ff00ff"/><stop offset="1" stop-color="#ff0000"/></linearGradient>
<radialGradient id="fbW" gradientUnits="userSpaceOnUse" cx="1435.1" cy="458.4" r="150"><stop offset="0" stop-color="#ffffff" stop-opacity="1"/><stop offset="1" stop-color="#ffffff" stop-opacity="0"/></radialGradient>
<linearGradient id="fbTR" gradientUnits="userSpaceOnUse" x1="1423.9" y1="277.6" x2="1722.4" y2="457.7"><stop offset="0" stop-color="#009900"/><stop offset="0.45" stop-color="#999900"/><stop offset="1" stop-color="#990000"/></linearGradient>
<linearGradient id="fbBT" gradientUnits="userSpaceOnUse" x1="1292.2" y1="637.8" x2="1722.4" y2="457.7"><stop offset="0" stop-color="#000099"/><stop offset="0.35" stop-color="#990099"/><stop offset="1" stop-color="#990000"/></linearGradient>
<clipPath id="fbClip"><path d="M1310.8 672.1 L1310.6 671.9 L1310.3 671.8 L1309.9 671.5 L1309.5 671.3 L1309.1 671.2 L1308.8 671.1 L1308.5 671.2 L1308.2 671.4 L1307.9 671.6 L1307.6 671.9 L1307.4 672.0 L1307.0 672.1 L1306.7 672.0 L1306.4 671.8 L1306.0 671.5 L1305.6 671.2 L1305.3 670.8 L1304.8 670.5 L1304.4 670.2 L1304.0 669.9 L1303.5 669.6 L1303.0 669.3 L1302.5 669.0 L1301.9 668.6 L1301.4 668.2 L1300.7 667.8 L1300.1 667.4 L1299.4 666.9 L1298.7 666.5 L1298.0 666.0 L1297.2 665.5 L1296.5 665.0 L1295.7 664.5 L1294.8 663.9 L1294.0 663.3 L1293.1 662.7 L1292.1 662.0 L1291.2 661.3 L1290.2 660.5 L1289.1 659.8 L1288.0 658.9 L1286.9 658.0 L1285.8 657.0 L1284.6 656.1 L1283.4 655.0 L1282.2 653.9 L1280.9 652.6 L1279.5 651.2 L1278.0 649.6 L1276.4 647.9 L1274.8 646.0 L1273.1 644.0 L1271.3 641.7 L1269.5 639.2 L1267.5 636.6 L1265.5 633.8 L1263.5 630.7 L1261.3 627.5 L1259.1 623.9 L1256.7 619.9 L1254.3 615.6 L1251.8 611.1 L1249.1 606.2 L1246.4 601.0 L1243.6 595.4 L1240.7 589.3 L1237.6 582.8 L1234.3 575.9 L1231.0 568.6 L1227.6 560.9 L1224.2 552.7 L1220.8 543.9 L1217.4 534.6 L1214.0 524.8 L1210.6 514.6 L1207.1 503.8 L1203.7 492.6 L1200.4 481.0 L1197.0 468.9 L1193.6 456.2 L1190.3 443.1 L1187.1 429.7 L1184.0 416.1 L1181.1 402.5 L1178.4 388.8 L1175.9 374.7 L1173.5 360.6 L1171.2 346.4 L1169.3 332.4 L1167.7 318.7 L1166.4 305.2 L1165.3 291.8 L1164.4 278.6 L1163.9 265.7 L1163.7 253.1 L1163.9 241.0 L1164.5 229.4 L1165.4 218.0 L1166.7 207.0 L1168.3 196.4 L1170.3 186.6 L1172.7 177.4 L1175.5 168.9 L1178.7 161.0 L1182.3 153.7 L1186.2 147.1 L1190.3 141.3 L1194.7 136.2 L1199.3 132.0 L1204.2 128.6 L1209.4 126.0 L1214.7 124.1 L1220.2 122.6 L1225.7 121.7 L1231.3 121.3 L1237.1 121.6 L1243.0 122.4 L1248.9 123.7 L1254.9 125.2 L1260.8 126.7 L1266.7 128.5 L1272.7 130.5 L1278.6 132.8 L1284.6 135.2 L1290.5 137.8 L1296.3 140.3 L1302.0 142.8 L1307.7 145.4 L1313.3 148.1 L1318.9 150.8 L1324.4 153.6 L1329.9 156.5 L1335.3 159.4 L1340.7 162.3 L1346.1 165.3 L1351.4 168.4 L1356.8 171.5 L1362.1 174.7 L1367.4 177.9 L1372.7 181.2 L1378.0 184.5 L1383.3 187.9 L1388.6 191.3 L1393.9 194.7 L1399.1 198.2 L1404.4 201.7 L1409.6 205.2 L1414.8 208.8 L1420.1 212.4 L1425.3 216.0 L1430.5 219.7 L1435.8 223.4 L1441.0 227.1 L1446.2 230.8 L1451.4 234.6 L1456.6 238.3 L1461.9 242.1 L1467.1 245.9 L1472.4 249.7 L1477.6 253.6 L1482.9 257.4 L1488.1 261.3 L1493.3 265.1 L1498.5 269.0 L1503.7 272.9 L1508.9 276.8 L1514.1 280.7 L1519.3 284.5 L1524.5 288.4 L1529.7 292.3 L1534.9 296.2 L1540.1 300.1 L1545.3 304.0 L1550.4 307.8 L1555.5 311.7 L1560.7 315.5 L1565.7 319.4 L1570.8 323.2 L1575.9 327.0 L1580.9 330.8 L1585.9 334.6 L1590.9 338.4 L1595.8 342.1 L1600.7 345.9 L1605.6 349.6 L1610.5 353.2 L1615.3 356.9 L1620.1 360.5 L1624.8 364.1 L1629.6 367.7 L1634.2 371.2 L1638.8 374.7 L1643.4 378.2 L1647.9 381.6 L1652.4 385.0 L1656.9 388.3 L1661.2 391.6 L1665.5 394.9 L1669.8 398.1 L1673.9 401.2 L1678.0 404.4 L1682.1 407.4 L1686.0 410.4 L1689.8 413.3 L1693.6 416.2 L1697.2 418.9 L1700.8 421.6 L1704.3 424.2 L1707.7 426.8 L1711.0 429.3 L1714.3 431.8 L1717.5 434.3 L1720.7 436.7 L1723.7 439.0 L1726.7 441.2 L1729.6 443.4 L1732.4 445.5 L1735.1 447.5 L1737.7 449.5 L1740.3 451.4 L1742.7 453.2 L1745.1 455.0 L1747.4 456.8 L1749.6 458.4 L1751.7 460.0 L1753.7 461.6 L1755.7 463.1 L1757.6 464.6 L1759.5 466.0 L1761.2 467.3 L1762.9 468.6 L1764.5 469.8 L1766.1 471.0 L1767.6 472.2 L1769.1 473.3 L1770.5 474.3 L1771.9 475.3 L1773.2 476.3 L1774.4 477.3 L1775.6 478.2 L1776.8 479.1 L1777.9 479.9 L1779.0 480.7 L1780.0 481.5 L1781.0 482.3 L1782.0 483.0 L1783.0 483.8 L1783.9 484.5 L1784.8 485.2 L1785.7 485.8 L1786.6 486.5 L1787.4 487.1 L1788.2 487.7 L1789.0 488.3 L1789.7 488.9 L1790.4 489.4 L1791.1 489.9 L1791.8 490.4 L1792.4 490.9 L1793.1 491.4 L1793.6 491.8 L1794.2 492.2 L1794.8 492.7 L1795.3 493.0 L1795.8 493.4 L1796.3 493.8 L1796.7 494.1 L1797.1 494.4 L1797.5 494.7 L1797.9 495.0 L1798.3 495.3 L1798.7 495.6 L1799.0 495.9 L1799.3 496.1 L1799.6 496.3 L1799.9 496.6 L1800.2 496.8 L1800.5 497.0 L1800.8 497.2 L1801.1 497.4 L1801.3 497.6 L1801.4 497.7 Z"/></clipPath>
</defs>
<g clip-path="url(#fbClip)"><rect x="1160" y="116" width="739" height="562" fill="url(#fbL)"/>
<path d="M1423.9 277.6 L1722.4 457.7 L1899 457.7 L1899 116 L1423.9 116 Z" fill="url(#fbTR)"/>
<path d="M1292.2 637.8 L1722.4 457.7 L1899 457.7 L1899 678 L1292.2 678 Z" fill="url(#fbBT)"/>
<path d="M1435.1 458.4 L1423.9 277.6 L1722.4 457.7 Z" fill="url(#fbRG)"/>
<path d="M1435.1 458.4 L1423.9 277.6 L1292.2 637.8 Z" fill="url(#fbGB)"/>
<path d="M1435.1 458.4 L1292.2 637.8 L1722.4 457.7 Z" fill="url(#fbBR)"/>
<path d="M1423.9 277.6 L1722.4 457.7 L1292.2 637.8 Z" fill="url(#fbW)"/></g>
<rect x="1643" y="124.5" width="250" height="210" fill="#d8e000"/>
</svg>
<canvas id="cie" class="abs" width="739" height="562" style="left:1160px;top:116px;"></canvas>
<canvas id="ins" class="abs" width="250" height="210" style="left:1643px;top:124.5px;"></canvas>
<script>
(function(){
var L=[[0.1712,0.0086],[0.1689,0.01],[0.1669,0.0086],[0.1644,0.0109],[0.1611,0.0138],[0.1566,0.0177],[0.151,0.0227],[0.144,0.0297],[0.1355,0.0399],[0.1241,0.0578],[0.1096,0.0868],[0.0913,0.1327],[0.0687,0.2007],[0.0454,0.295],[0.0235,0.4127],[0.0082,0.5384],[0.0039,0.6548],[0.0139,0.7502],[0.0389,0.812],[0.0743,0.8338],[0.1142,0.8262],[0.1547,0.8059],[0.1929,0.7816],[0.2296,0.7543],[0.2658,0.7243],[0.3016,0.6923],[0.3373,0.6589],[0.3731,0.6245],[0.4087,0.5896],[0.4441,0.5547],[0.4788,0.5202],[0.5125,0.4866],[0.5448,0.4544],[0.5752,0.4242],[0.6029,0.3965],[0.627,0.3725],[0.6482,0.3514],[0.6658,0.334],[0.6801,0.3197],[0.6915,0.3083],[0.7006,0.2993],[0.7079,0.292],[0.714,0.2859],[0.719,0.2809],[0.723,0.277],[0.726,0.274],[0.7283,0.2717],[0.73,0.27]];
var R=[0.64,0.33],G=[0.30,0.60],B=[0.15,0.06];
var S=[];
(function(){
  var n=L.length;
  for(var i=0;i<n-1;i++){
    var p0=L[Math.max(i-1,0)],p1=L[i],p2=L[i+1],p3=L[Math.min(i+2,n-1)];
    for(var k=0;k<10;k++){
      var t=k/10,t2=t*t,t3=t2*t;
      var px=0.5*((2*p1[0])+(-p0[0]+p2[0])*t+(2*p0[0]-5*p1[0]+4*p2[0]-p3[0])*t2+(-p0[0]+3*p1[0]-3*p2[0]+p3[0])*t3);
      var py=0.5*((2*p1[1])+(-p0[1]+p2[1])*t+(2*p0[1]-5*p1[1]+4*p2[1]-p3[1])*t2+(-p0[1]+3*p1[1]-3*p2[1]+p3[1])*t3);
      S.push([px,py]);
    }
  }
  S.push(L[n-1]);
})();
var DIM=0.59;
function lin(x,y,o){
  if(y<1e-4)y=1e-4;
  var X=x/y,Z=(1-x-y)/y;
  var r=3.2406*X-1.5372-0.4986*Z, g=-0.9689*X+1.8758+0.0415*Z, b=0.0557*X-0.2040+1.0570*Z;
  if(r<0)r=0; if(g<0)g=0; if(b<0)b=0;
  var m=Math.max(r,g,b); if(m<=0)m=1;
  o[0]=r/m;o[1]=g/m;o[2]=b/m;
}
function side(ax,ay,bx,by,px,py){return (bx-ax)*(py-ay)-(by-ay)*(px-ax);}
function inTri(x,y){
  var d1=side(R[0],R[1],G[0],G[1],x,y), d2=side(G[0],G[1],B[0],B[1],x,y), d3=side(B[0],B[1],R[0],R[1],x,y);
  var neg=(d1<0)||(d2<0)||(d3<0), pos=(d1>0)||(d2>0)||(d3>0);
  return !(neg&&pos);
}
var E=[[R,G],[G,B],[B,R]];
var tmp=[0,0,0];
function color(x,y,o){
  if(inTri(x,y)){ lin(x,y,o); return; }
  var dGB=side(G[0],G[1],B[0],B[1],x,y);
  var inside=side(G[0],G[1],B[0],B[1],R[0],R[1]);
  if(dGB*inside<0){
    var yy=y; if(yy>G[1])yy=G[1]; if(yy<B[1])yy=B[1];
    if(yy>=0.33){ var tt=(G[1]-yy)/(G[1]-0.33); o[0]=0;o[1]=DIM;o[2]=DIM*tt; return; }
    var xx=G[0]+(B[0]-G[0])*(G[1]-yy)/(G[1]-B[1]);
    lin(xx,yy,o); var f=DIM; o[0]*=f;o[1]*=f;o[2]*=f; return;
  }
  var dBR=side(B[0],B[1],R[0],R[1],x,y);
  var insBR=side(B[0],B[1],R[0],R[1],G[0],G[1]);
  if(false && dBR*insBR<0){
    var xx2=x; if(xx2<B[0])xx2=B[0]; if(xx2>R[0])xx2=R[0];
    var yy2=B[1]+(R[1]-B[1])*(xx2-B[0])/(R[0]-B[0]);
    lin(xx2,yy2,o); o[0]*=DIM;o[1]*=DIM;o[2]*=DIM; return;
  }
  var best=1e9,qx=0,qy=0;
  for(var i=0;i<3;i++){
    var a=E[i][0],b=E[i][1];
    var ex=b[0]-a[0],ey=b[1]-a[1];
    var t=((x-a[0])*ex+(y-a[1])*ey)/(ex*ex+ey*ey);
    if(t<0)t=0; if(t>1)t=1;
    var cx=a[0]+t*ex, cy=a[1]+t*ey;
    var d=(x-cx)*(x-cx)+(y-cy)*(y-cy);
    if(d<best){best=d;qx=cx;qy=cy;}
  }
  lin(qx,qy,o); o[0]*=DIM;o[1]*=DIM;o[2]*=DIM;
}
function render(cv, x0, xs, y0, ys, left, top, clip){
  var W=cv.width,H=cv.height;
  var off=document.createElement('canvas'); off.width=W; off.height=H;
  var oc=off.getContext('2d');
  var img=oc.createImageData(W,H), d=img.data, o=[0,0,0];
  for(var j=0;j<H;j++){
    for(var i=0;i<W;i++){
      var sx=0,sy=0,sz=0;
      for(var s=0;s<2;s++)for(var t=0;t<2;t++){
        var px=left+i+0.25+0.5*s, py=top+j+0.25+0.5*t;
        var x=(px-x0)/xs, y=(y0-py)/ys;
        color(x,y,o); sx+=o[0];sy+=o[1];sz+=o[2];
      }
      var k=(j*W+i)*4;
      d[k]=sx*63.75; d[k+1]=sy*63.75; d[k+2]=sz*63.75; d[k+3]=255;
    }
  }
  oc.putImageData(img,0,0);
  var ctx=cv.getContext('2d');
  ctx.save();
  if(clip){
    ctx.beginPath();
    for(var n=0;n<S.length;n++){
      var px=S[n][0]*xs+x0-left, py=y0-S[n][1]*ys-top;
      if(n==0)ctx.moveTo(px,py); else ctx.lineTo(px,py);
    }
    ctx.closePath(); ctx.clip();
  }
  ctx.drawImage(off,0,0);
  ctx.restore();
}
render(document.getElementById('cie'), 1160.5, 878.0, 677.8, 667.0, 1160, 116, true);
render(document.getElementById('ins'), 1767-0.4193*5000, 5000, 229+0.5053*4200, 4200, 1643, 124.5, false);
})();
</script>
<svg class="abs" width="1920" height="1044" viewBox="0 0 1920 1044">
<defs><linearGradient id="shd" gradientUnits="userSpaceOnUse" x1="1311" y1="0" x2="1803" y2="0"><stop offset="0" stop-color="#2c2240"/><stop offset="0.5" stop-color="#40203a"/><stop offset="1" stop-color="#5a1822"/></linearGradient></defs>
<path d="M1311.8 674.5 L1804.9 499.9" stroke="url(#shd)" stroke-width="1.1" fill="none"/>
<path d="M1160.5 677.8 V116.5 H1898.6 V677.8 H1160.5" fill="none" stroke="#a0a0a0" stroke-width="2"/>
<rect x="1159.5" y="677.8" width="2" height="6.5" fill="#a0a0a0"/>
<text x="1160.5" y="702.3" font-size="16" fill="#d6d6d6" text-anchor="middle" font-weight="normal" >0</text>
<rect x="1152.5" y="676.8" width="8" height="2" fill="#a0a0a0"/>
<text x="1152" y="683.5" font-size="16" fill="#d6d6d6" text-anchor="end" font-weight="normal" >0</text>
<rect x="1247.3" y="677.8" width="2" height="6.5" fill="#a0a0a0"/>
<text x="1248.3" y="702.3" font-size="16" fill="#d6d6d6" text-anchor="middle" font-weight="normal" >0,1</text>
<rect x="1152.5" y="610.1" width="8" height="2" fill="#a0a0a0"/>
<text x="1152" y="616.8" font-size="16" fill="#d6d6d6" text-anchor="end" font-weight="normal" >0,1</text>
<rect x="1335.1" y="677.8" width="2" height="6.5" fill="#a0a0a0"/>
<text x="1336.1" y="702.3" font-size="16" fill="#d6d6d6" text-anchor="middle" font-weight="normal" >0,2</text>
<rect x="1152.5" y="543.4" width="8" height="2" fill="#a0a0a0"/>
<text x="1152" y="550.1" font-size="16" fill="#d6d6d6" text-anchor="end" font-weight="normal" >0,2</text>
<rect x="1422.9" y="677.8" width="2" height="6.5" fill="#a0a0a0"/>
<text x="1423.9" y="702.3" font-size="16" fill="#d6d6d6" text-anchor="middle" font-weight="normal" >0,3</text>
<rect x="1152.5" y="476.7" width="8" height="2" fill="#a0a0a0"/>
<text x="1152" y="483.4" font-size="16" fill="#d6d6d6" text-anchor="end" font-weight="normal" >0,3</text>
<rect x="1510.7" y="677.8" width="2" height="6.5" fill="#a0a0a0"/>
<text x="1511.7" y="702.3" font-size="16" fill="#d6d6d6" text-anchor="middle" font-weight="normal" >0,4</text>
<rect x="1152.5" y="410.0" width="8" height="2" fill="#a0a0a0"/>
<text x="1152" y="416.7" font-size="16" fill="#d6d6d6" text-anchor="end" font-weight="normal" >0,4</text>
<rect x="1598.5" y="677.8" width="2" height="6.5" fill="#a0a0a0"/>
<text x="1599.5" y="702.3" font-size="16" fill="#d6d6d6" text-anchor="middle" font-weight="normal" >0,5</text>
<rect x="1152.5" y="343.3" width="8" height="2" fill="#a0a0a0"/>
<text x="1152" y="350.0" font-size="16" fill="#d6d6d6" text-anchor="end" font-weight="normal" >0,5</text>
<rect x="1686.3" y="677.8" width="2" height="6.5" fill="#a0a0a0"/>
<text x="1687.3" y="702.3" font-size="16" fill="#d6d6d6" text-anchor="middle" font-weight="normal" >0,6</text>
<rect x="1152.5" y="276.6" width="8" height="2" fill="#a0a0a0"/>
<text x="1152" y="283.3" font-size="16" fill="#d6d6d6" text-anchor="end" font-weight="normal" >0,6</text>
<rect x="1774.1" y="677.8" width="2" height="6.5" fill="#a0a0a0"/>
<text x="1775.1" y="702.3" font-size="16" fill="#d6d6d6" text-anchor="middle" font-weight="normal" >0,7</text>
<rect x="1152.5" y="209.9" width="8" height="2" fill="#a0a0a0"/>
<text x="1152" y="216.6" font-size="16" fill="#d6d6d6" text-anchor="end" font-weight="normal" >0,7</text>
<rect x="1861.9" y="677.8" width="2" height="6.5" fill="#a0a0a0"/>
<text x="1862.9" y="702.3" font-size="16" fill="#d6d6d6" text-anchor="middle" font-weight="normal" >0,8</text>
<rect x="1152.5" y="143.2" width="8" height="2" fill="#a0a0a0"/>
<text x="1152" y="149.9" font-size="16" fill="#d6d6d6" text-anchor="end" font-weight="normal" >0,8</text>
<rect x="1639" y="121" width="257" height="216" fill="none" stroke="#2a2a2a" stroke-width="3"/>
<rect x="1642.9" y="124.5" width="249.3" height="210" fill="none" stroke="#9a9a9a" stroke-width="1.6"/>
<rect x="1415.1" y="268.4" width="15" height="15" fill="none" stroke="#ffffff" stroke-width="2"/>
<rect x="1418.2" y="307.5" width="15" height="15" fill="none" stroke="#ffffff" stroke-width="2"/>
<rect x="1419.9" y="342.8" width="15" height="15" fill="none" stroke="#ffffff" stroke-width="2"/>
<rect x="1423.0" y="377.3" width="15" height="15" fill="none" stroke="#ffffff" stroke-width="2"/>
<rect x="1424.5" y="412.5" width="15" height="15" fill="none" stroke="#ffffff" stroke-width="2"/>
<rect x="1520.4" y="332.2" width="15" height="15" fill="none" stroke="#ffffff" stroke-width="2"/>
<rect x="1500.4" y="356.6" width="15" height="15" fill="none" stroke="#ffffff" stroke-width="2"/>
<rect x="1483.4" y="378.7" width="15" height="15" fill="none" stroke="#ffffff" stroke-width="2"/>
<rect x="1464.7" y="400.6" width="15" height="15" fill="none" stroke="#ffffff" stroke-width="2"/>
<rect x="1445.9" y="425.1" width="15" height="15" fill="none" stroke="#ffffff" stroke-width="2"/>
<rect x="1349.5" y="450.0" width="15" height="15" fill="none" stroke="#ffffff" stroke-width="2"/>
<rect x="1365.5" y="450.0" width="15" height="15" fill="none" stroke="#ffffff" stroke-width="2"/>
<rect x="1380.5" y="450.0" width="15" height="15" fill="none" stroke="#ffffff" stroke-width="2"/>
<rect x="1396.1" y="450.0" width="15" height="15" fill="none" stroke="#ffffff" stroke-width="2"/>
<rect x="1410.7" y="450.0" width="15" height="15" fill="none" stroke="#ffffff" stroke-width="2"/>
<rect x="1483.3" y="448.5" width="15" height="15" fill="none" stroke="#ffffff" stroke-width="2"/>
<rect x="1542.4" y="448.5" width="15" height="15" fill="none" stroke="#ffffff" stroke-width="2"/>
<rect x="1595.0" y="448.5" width="15" height="15" fill="none" stroke="#ffffff" stroke-width="2"/>
<rect x="1651.0" y="448.5" width="15" height="15" fill="none" stroke="#ffffff" stroke-width="2"/>
<rect x="1714.3" y="448.5" width="15" height="15" fill="none" stroke="#ffffff" stroke-width="2"/>
<rect x="1283.2" y="628.2" width="15" height="15" fill="none" stroke="#ffffff" stroke-width="2"/>
<rect x="1314.6" y="589.9" width="15" height="15" fill="none" stroke="#ffffff" stroke-width="2"/>
<rect x="1342.0" y="555.4" width="15" height="15" fill="none" stroke="#ffffff" stroke-width="2"/>
<rect x="1369.8" y="521.5" width="15" height="15" fill="none" stroke="#ffffff" stroke-width="2"/>
<rect x="1397.9" y="485.9" width="15" height="15" fill="none" stroke="#ffffff" stroke-width="2"/>
<rect x="1433.6" y="566.5" width="15" height="15" fill="none" stroke="#ffffff" stroke-width="2"/>
<rect x="1431.8" y="542.0" width="15" height="15" fill="none" stroke="#ffffff" stroke-width="2"/>
<rect x="1430.5" y="518.5" width="15" height="15" fill="none" stroke="#ffffff" stroke-width="2"/>
<rect x="1430.5" y="498.5" width="15" height="15" fill="none" stroke="#ffffff" stroke-width="2"/>
<rect x="1428.8" y="473.5" width="15" height="15" fill="none" stroke="#ffffff" stroke-width="2"/>
<rect x="1427.5" y="450.0" width="15" height="15" fill="none" stroke="#000000" stroke-width="2"/>
<circle cx="1425.7" cy="258.6" r="4.7" fill="#10c010" stroke="#000" stroke-width="1.5"/>
<circle cx="1427.0" cy="300.7" r="4.7" fill="#60b060" stroke="#000" stroke-width="1.5"/>
<circle cx="1429.1" cy="339.7" r="4.7" fill="#78b078" stroke="#000" stroke-width="1.5"/>
<circle cx="1430.5" cy="378.3" r="4.7" fill="#8cb08c" stroke="#000" stroke-width="1.5"/>
<circle cx="1433.1" cy="416.7" r="4.7" fill="#a0b8a0" stroke="#000" stroke-width="1.5"/>
<circle cx="1531.2" cy="327.0" r="4.7" fill="#c8c000" stroke="#000" stroke-width="1.5"/>
<circle cx="1511.0" cy="355.2" r="4.7" fill="#c4c060" stroke="#000" stroke-width="1.5"/>
<circle cx="1492.2" cy="377.9" r="4.7" fill="#c0be7c" stroke="#000" stroke-width="1.5"/>
<circle cx="1474.0" cy="403.0" r="4.7" fill="#c0be90" stroke="#000" stroke-width="1.5"/>
<circle cx="1453.4" cy="431.5" r="4.7" fill="#c0bea0" stroke="#000" stroke-width="1.5"/>
<circle cx="1357.5" cy="457.5" r="4.7" fill="#10b4b4" stroke="#000" stroke-width="1.5"/>
<circle cx="1373.0" cy="457.5" r="4.7" fill="#58acac" stroke="#000" stroke-width="1.5"/>
<circle cx="1387.0" cy="457.5" r="4.7" fill="#74b0b0" stroke="#000" stroke-width="1.5"/>
<circle cx="1404.0" cy="457.5" r="4.7" fill="#90b0b0" stroke="#000" stroke-width="1.5"/>
<circle cx="1418.0" cy="457.5" r="4.7" fill="#a8b8b8" stroke="#000" stroke-width="1.5"/>
<circle cx="1492.2" cy="454.6" r="4.7" fill="#c09090" stroke="#000" stroke-width="1.5"/>
<circle cx="1551.3" cy="456.0" r="4.7" fill="#c07474" stroke="#000" stroke-width="1.5"/>
<circle cx="1604.0" cy="454.6" r="4.7" fill="#c06060" stroke="#000" stroke-width="1.5"/>
<circle cx="1663.0" cy="454.6" r="4.7" fill="#c04040" stroke="#000" stroke-width="1.5"/>
<circle cx="1720.3" cy="454.6" r="4.7" fill="#c00000" stroke="#000" stroke-width="1.5"/>
<circle cx="1294.0" cy="647.2" r="4.7" fill="#0000e0" stroke="#000" stroke-width="1.5"/>
<circle cx="1321.7" cy="607.9" r="4.7" fill="#5050c8" stroke="#000" stroke-width="1.5"/>
<circle cx="1349.7" cy="571.0" r="4.7" fill="#6c6cc0" stroke="#000" stroke-width="1.5"/>
<circle cx="1375.7" cy="535.7" r="4.7" fill="#9090c0" stroke="#000" stroke-width="1.5"/>
<circle cx="1405.2" cy="496.2" r="4.7" fill="#a0a0b8" stroke="#000" stroke-width="1.5"/>
<circle cx="1439.5" cy="581.7" r="4.7" fill="#c000c0" stroke="#000" stroke-width="1.5"/>
<circle cx="1439.5" cy="555.2" r="4.7" fill="#c050b8" stroke="#000" stroke-width="1.5"/>
<circle cx="1437.6" cy="530.3" r="4.7" fill="#c070c0" stroke="#000" stroke-width="1.5"/>
<circle cx="1436.3" cy="508.7" r="4.7" fill="#c090c0" stroke="#000" stroke-width="1.5"/>
<circle cx="1434.8" cy="482.0" r="4.7" fill="#c0a0b8" stroke="#000" stroke-width="1.5"/>
<circle cx="1433.5" cy="457.5" r="4.7" fill="#ffffff" stroke="#000" stroke-width="1.5"/>
<rect x="1758.2" y="220.9" width="14.6" height="14.6" fill="none" stroke="#ffffff" stroke-width="2"/>
<circle cx="1780.8" cy="155.7" r="4.7" fill="#c8c000" stroke="#000" stroke-width="1.5"/>
<circle cx="1667.0" cy="325.0" r="4.7" fill="#c0c060" stroke="#000" stroke-width="1.5"/>
</svg>
</body></html>
